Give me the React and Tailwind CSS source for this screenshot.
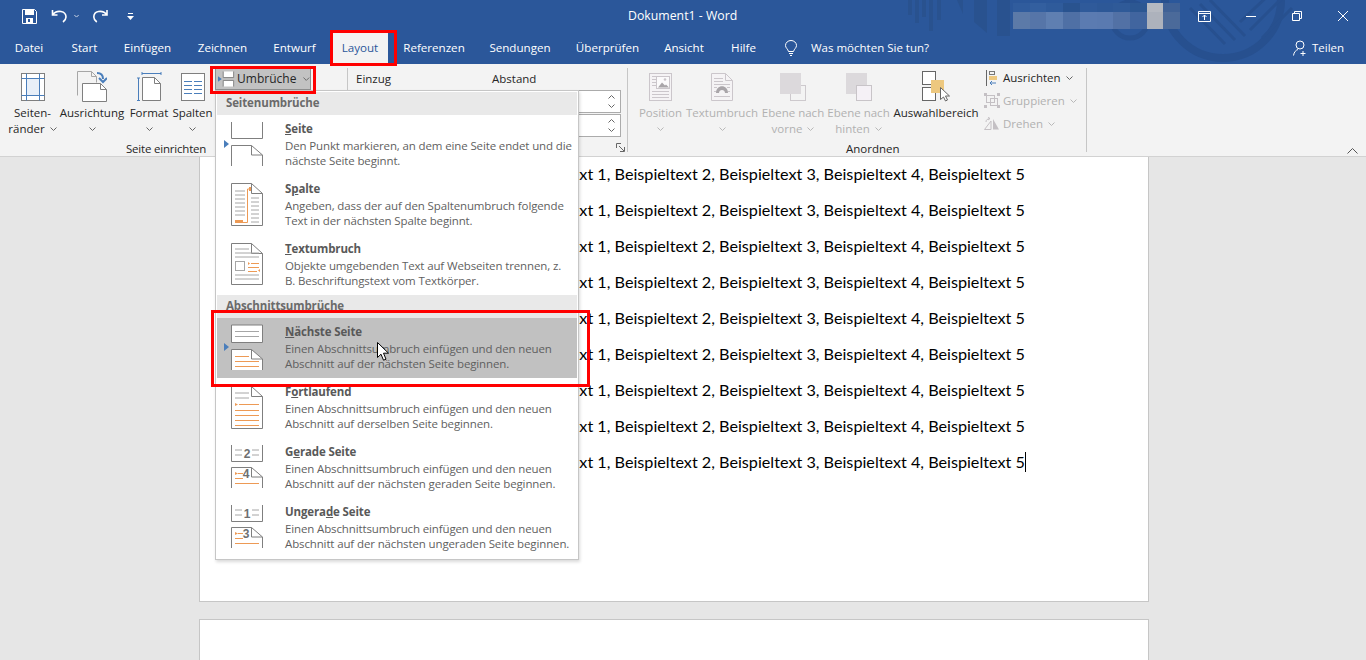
import React from "react";

const G = "#7f7f7f";
const O = "#ed9a55";
const L = "#a6a6a6";
const B = "#4a7ebb";

const Chev = ({ c = "#666", className = "" }) => (
  <svg width="7" height="4" viewBox="0 0 7 4" className={className}>
    <path d="M.5.5 3.500 3.500 6.500.5" fill="none" stroke={c} />
  </svg>
);

const Tab = ({ w, children }) => (
  <div className={`${w} flex h-full items-center justify-center whitespace-nowrap text-white`}>{children}</div>
);

function Decor() {
  return (
    <svg className="absolute left-[900px] top-0" width="400" height="64" viewBox="0 0 400 64" fill="none">
      <g fill="#29528f">
        <rect x="8" y="0" width="4" height="15" />
        <rect x="15" y="0" width="4" height="23" />
        <rect x="22" y="0" width="4" height="17" />
        <rect x="29" y="0" width="4" height="31" />
        <rect x="37" y="0" width="4" height="20" />
        <path d="M57 0h6v14zM74 0h13v33l-13-11zM97 0h13v36H97z" />
      </g>
      <circle cx="323" cy="0" r="58" stroke="#27508f" strokeWidth="8" />
      <circle cx="230" cy="20" r="18" stroke="#27508f" strokeWidth="5" />
      <g stroke="#27508f" strokeWidth="3">
        <path d="M290 8 325 44M300 4 335 40M310 0 345 36M340 22 372 -8M350 30 382 -2M362 38 392 8" />
      </g>
    </svg>
  );
}

function Mosaic() {
  const top = ["#305c9d", "#335f9f", "#2f5b9b", "#29538f", "#2f5a9a", "#2d5897", "#2f5a98", "#2c5792", "#b5b9c1", "#3f6196"];
  const bot = ["#5c7aa8", "#5675a8", "#5f7fb1", "#4f70a5", "#5b7bb1", "#5a7ab0", "#5271a5", "#41659f", "#adb2bc", "#4b6a9a"];
  return (
    <div className="mt-[3px] flex h-[26px] w-[167px] flex-col self-start">
      <div className="flex h-[9px]">{top.map((c, i) => <div key={i} className="h-full flex-1" style={{ background: c }} />)}</div>
      <div className="flex h-[17px]">{bot.map((c, i) => <div key={i} className="h-full flex-1" style={{ background: c }} />)}</div>
    </div>
  );
}

function TitleBar() {
  return (
    <div className="relative flex h-[32px] shrink-0 items-center text-[12.3px] text-white">
      <div className="flex w-[628px] items-center">
        <svg className="ml-[22px]" width="15" height="15" viewBox="0 0 15 15" fill="none">
          <path d="M.5.5h12l2 2v12H.5z" stroke="#fff" />
          <rect x="3" y="1" width="9" height="5" fill="#fff" />
          <rect x="4" y="9" width="7" height="5" fill="#fff" />
          <rect x="6" y="10" width="2" height="3" fill="#2b579a" />
        </svg>
        <svg className="ml-[14px]" width="16" height="14" viewBox="0 0 16 14" fill="none" stroke="#fff" strokeWidth="1.6">
          <path d="M1.500 1v5h5M1.500 6C4 2.500 7 2 10 2.500c3.500.7 5 3 5 5.500 0 2-1 3.500-3 5" />
        </svg>
        <Chev c="#fff" className="ml-[6px] scale-75" />
        <svg className="ml-[13px]" width="15" height="14" viewBox="0 0 15 14" fill="none" stroke="#fff" strokeWidth="1.6">
          <path d="M14 1v5H9M14 6C11.500 2.500 8.500 2 5.500 2.500 2 3.200.8 5.500.8 8c0 2 1 3.500 3 5" />
        </svg>
        <svg className="ml-[19px]" width="7" height="7" viewBox="0 0 7 7">
          <rect x="1" y="0" width="5" height="1" fill="#fff" />
          <path d="M0 3h7L3.500 7z" fill="#fff" />
        </svg>
      </div>
      <div className="w-[385px] whitespace-nowrap">Dokument1 - Word</div>
      <Mosaic />
      <div className="flex flex-1 items-center">
        <svg className="ml-[18px]" width="13" height="11" viewBox="0 0 13 11" fill="none" stroke="#fff">
          <path d="M.5.5h12v10H.5zM.5 2.500h12" />
          <path d="M6.500 9V4M4.500 6l2-2 2 2" />
        </svg>
        <div className="ml-[35px] h-px w-[10px] bg-white" />
        <svg className="ml-[36px]" width="10" height="10" viewBox="0 0 10 10" fill="none" stroke="#fff">
          <path d="M.5 2.500h7v7h-7zM2.500 2.500v-2h7v7h-2" />
        </svg>
        <svg className="ml-[36px]" width="10" height="10" viewBox="0 0 10 10" stroke="#fff">
          <path d="M0 0l10 10M10 0 0 10" />
        </svg>
      </div>
    </div>
  );
}

function Tabs() {
  return (
    <div className="relative flex h-[32px] shrink-0 items-center text-[11.6px]">
      <Tab w="w-[58px]">Datei</Tab>
      <Tab w="w-[53px]">Start</Tab>
      <Tab w="w-[73px]">Einfügen</Tab>
      <Tab w="w-[77px]">Zeichnen</Tab>
      <Tab w="w-[67px]">Entwurf</Tab>
      <div className="ml-[4px] flex h-full w-[56px] items-center justify-center bg-[#f3f3f3] text-[#2b579a]">Layout</div>
      <Tab w="w-[92px]">Referenzen</Tab>
      <Tab w="w-[80px]">Sendungen</Tab>
      <Tab w="w-[95px]">Überprüfen</Tab>
      <Tab w="w-[58px]">Ansicht</Tab>
      <Tab w="w-[61px]">Hilfe</Tab>
      <svg className="ml-[11px]" width="12" height="16" viewBox="0 0 12 16" fill="none" stroke="#fff">
        <path d="M3.500 11.500C3 9 .5 8 .5 5.500a5.500 5 0 0 1 11 0c0 2.500-2.500 3.500-3 6zM4 13.500h4M5 15.500h2" />
      </svg>
      <div className="ml-[14px] w-[482px] whitespace-nowrap text-[11.5px] text-white">Was möchten Sie tun?</div>
      <svg width="15" height="16" viewBox="0 0 15 16" fill="none" stroke="#fff">
        <circle cx="7" cy="5" r="4" />
        <path d="M.5 15.500C1 12 3 10 5 9.500M10 11v5M7.500 13.500h5" />
      </svg>
      <div className="ml-[4px] text-[11.5px] text-white">Teilen</div>
    </div>
  );
}

const Lbl = ({ children, off }) => (
  <div className={`flex h-[16px] items-center justify-center gap-[5px] whitespace-nowrap ${off ? "text-[#b1b1b1]" : "text-[#262626]"}`}>{children}</div>
);

function LargeBtn({ w, icon, l1, l2, chev, off }) {
  const cc = off ? "#b8b8b8" : "#666";
  return (
    <div className={`${w} flex shrink-0 flex-col items-center`}>
      <div className="flex h-[37px] w-full items-center justify-center">{icon}</div>
      <Lbl off={off}>{l1}</Lbl>
      <Lbl off={off}>{l2}{chev && <Chev c={cc} />}</Lbl>
    </div>
  );
}

const MarginsIcon = () => (
  <svg width="24" height="28" viewBox="0 0 24 28" fill="none">
    <rect x=".5" y=".5" width="23" height="27" fill="#fff" stroke={G} />
    <rect x="6" y="6" width="12" height="16" fill="#e8eff8" />
    <path d="M.5 5.500h23M.5 22.500h23M5.500.5v27M18.500.5v27" stroke={B} />
  </svg>
);
const OrientIcon = () => (
  <svg width="30" height="31" viewBox="0 0 30 31" fill="none">
    <path d="M.5 24.500V.5h14l5 5v6" stroke={L} />
    <path d="M14.500.5v5h5" stroke={L} />
    <path d="M5.500 12.500h18l6 6v12h-24z" fill="#fff" stroke={G} />
    <path d="M23.500 12.500v6h6" stroke={G} />
    <path d="M20 2c4 0 6 2 6 6" stroke={B} strokeWidth="2" />
    <path d="M22 7l4 4 4-4" stroke={B} strokeWidth="2" />
  </svg>
);
const FormatIcon = () => (
  <svg width="25" height="29" viewBox="0 0 25 29" fill="none">
    <path d="M5 1.500h19M5 0v3M24 0v3M1.500 6v23M0 6h3M0 28.500h3" stroke={B} />
    <path d="M5.500 5.500h12l6 6v17h-18z" fill="#fff" stroke={G} />
    <path d="M17.500 5.500v6h6" stroke={G} />
  </svg>
);
const ColsIcon = () => (
  <svg width="24" height="28" viewBox="0 0 24 28" fill="none">
    <rect x=".5" y=".5" width="23" height="27" fill="#fff" stroke={G} />
    <path d="M3 8.500h8M13 8.500h8M3 12.500h8M13 12.500h8M3 16.500h8M13 16.500h8M3 20.500h8M13 20.500h8" stroke={B} />
  </svg>
);
const PosIcon = () => (
  <svg width="24" height="28" viewBox="0 0 24 28" fill="none" stroke="#cbc6cb">
    <rect x=".5" y=".5" width="22" height="27" fill="#f5f3f5" />
    <path d="M3 3.500h4M3 6.500h4M3 9.500h4M3 12.500h4M3 18.500h17M3 21.500h17M3 24.500h17" />
    <rect x="7.500" y="3.500" width="13" height="12" fill="#fbfafb" />
    <path d="M9 14.500l4-5 3 3 1-1 3 3z" fill="#a9a5a9" stroke="none" />
    <circle cx="16" cy="6.500" r="1.300" fill="#c9c5c9" stroke="none" />
  </svg>
);
const WrapIcon = () => (
  <svg width="22" height="28" viewBox="0 0 22 28" fill="none" stroke="#cbc6cb">
    <path d="M.5.500h14l7 7v20H.5z" fill="#f5f3f5" />
    <path d="M14.500.5v7h7" />
    <path d="M3 5.500h9M3 8.500h9M3 11.500h16M3 14.500h3M16 14.500h3M3 18.500h2M17 18.500h2M3 23.500h16" />
    <path d="M5 20c0-9 12-9 12 0h-3c0-4-6-4-6 0z" fill="#a9a5a9" stroke="none" />
  </svg>
);
const FrontIcon = () => (
  <svg width="26" height="28" viewBox="0 0 26 28" fill="none">
    <rect x="10.500" y="12.500" width="15" height="15" fill="#f3f3f3" stroke="#cdc9cd" />
    <rect x="0" y="0" width="21" height="21" fill="#dcd9dc" />
  </svg>
);
const BackIcon = () => (
  <svg width="26" height="28" viewBox="0 0 26 28" fill="none">
    <rect x="0" y="0" width="21" height="21" fill="#dcd9dc" />
    <rect x="10.500" y="12.500" width="15" height="15" fill="#f5f1f6" stroke="#c8c4c8" />
  </svg>
);
const SelIcon = () => (
  <svg width="28" height="31" viewBox="0 0 28 31" fill="none">
    <rect x=".5" y=".5" width="13" height="13" fill="#fff" stroke="#666" />
    <rect x=".5" y="16.500" width="13" height="13" fill="#fff" stroke="#666" />
    <rect x="9" y="9" width="13" height="13" fill="#edc87f" />
    <path d="M18.500 16.500v12l3-2.500 2 4 2-1-2-4h4z" fill="#fff" stroke="#666" />
  </svg>
);

const AlignI = () => (
  <svg width="12" height="16" viewBox="0 0 12 16" fill="none">
    <path d="M.5 0v16" stroke="#666" />
    <rect x="3.500" y="1.500" width="5" height="3" stroke="#777" />
    <rect x="3" y="6" width="8" height="4" fill="#edc87f" />
    <path d="M10 13H4M6 11l-2 2 2 2" stroke={B} />
  </svg>
);
const GroupI = () => (
  <svg width="16" height="15" viewBox="0 0 16 15" fill="none" stroke="#c4c0c4">
    <rect x="2.500" y="2.500" width="8" height="7" />
    <rect x="6.500" y="5.500" width="7" height="7" />
    <path d="M0 0h3v3H0zM13 0h3v3h-3zM0 12h3v3H0zM13 12h3v3h-3z" fill="#c4c0c4" stroke="none" />
  </svg>
);
const RotI = () => (
  <svg width="16" height="13" viewBox="0 0 16 13" fill="none" stroke="#c4c0c4">
    <path d="M.5 12.500 7 4v8.500z" />
    <path d="M9 12.500V2l6 10.500z" fill="#c4c0c4" stroke="none" />
    <path d="M2 5c0-2 1-3 4-3.500M4 0l2 1.500L4 3" />
  </svg>
);

const SmallRow = ({ icon, off, children }) => (
  <div className={`flex h-[23px] items-center gap-[3px] whitespace-nowrap ${off ? "text-[#b1b1b1]" : "text-[#262626]"}`}>
    <div className="flex w-[16px] justify-center">{icon}</div>
    {children}
    <Chev className="ml-[2px]" c={off ? "#b8b8b8" : "#666"} />
  </div>
);

const Spin = () => (
  <div className="flex h-[23px] w-[129px] items-center justify-end border border-[#ababab] bg-white pr-[5px]">
    <div className="flex flex-col gap-[5px]">
      <svg width="7" height="4" viewBox="0 0 7 4"><path d="M.5 3.500 3.500.5l3 3" fill="none" stroke="#666" /></svg>
      <Chev />
    </div>
  </div>
);

function Ribbon() {
  return (
    <div className="flex h-[93px] shrink-0 border-b border-[#d2d2d2] bg-[#f3f3f3] pt-[4px] text-[11.5px] text-[#262626]">
      <div className="flex w-[215px] shrink-0 flex-col">
        <div className="flex h-[72px] shrink-0 pl-[8px]">
          <LargeBtn w="w-[49px]" icon={<MarginsIcon />} l1="Seiten-" l2="ränder" chev />
          <LargeBtn w="w-[70px]" icon={<OrientIcon />} l1="Ausrichtung" l2="" chev />
          <LargeBtn w="w-[44px]" icon={<FormatIcon />} l1="Format" l2="" chev />
          <LargeBtn w="w-[43px]" icon={<ColsIcon />} l1="Spalten" l2="" chev />
        </div>
        <div className="ml-[126px] whitespace-nowrap tracking-[-0.2px]">Seite einrichten</div>
      </div>
      <div className="w-[132px] shrink-0">
        <div className="flex h-[22px] w-[96px] items-center gap-[2px] border border-[#8f8f8f] bg-[#c2c2c2] pl-[2px]">
          <svg width="18" height="16" viewBox="0 0 18 16" fill="none">
            <path d="M0 5l4 3-4 3z" fill={B} />
            <path d="M5.500 0v6.500h11V0M5.500 16V9.500h11V16" fill="#fff" stroke={G} />
          </svg>
          <span className="text-[12px]">Umbrüche</span>
          <Chev className="ml-[5px]" />
        </div>
      </div>
      <div className="relative mb-[4px] w-[281px] shrink-0 border-x border-[#c6c6c6] pl-[8px]">
        <div className="mb-px flex h-[21px] items-center">
          <div className="w-[136px]">Einzug</div>
          <div>Abstand</div>
        </div>
        <div className="flex flex-col items-end gap-px pr-[6px]">
          <Spin />
          <Spin />
        </div>
        <svg className="absolute bottom-[0px] right-[2px]" width="9" height="9" viewBox="0 0 9 9" fill="none" stroke="#666">
          <path d="M.5 5V.5H5M3 3l5 5M8.500 4v4.500H4" />
        </svg>
      </div>
      <div className="mb-[4px] flex w-[459px] shrink-0 flex-col border-r border-[#c6c6c6]">
        <div className="flex h-[72px] shrink-0 pl-[10px]">
          <LargeBtn w="w-[45px]" off icon={<PosIcon />} l1="Position" l2="" chev />
          <LargeBtn w="w-[78px]" off icon={<WrapIcon />} l1="Textumbruch" l2="" chev />
          <LargeBtn w="w-[64px]" off icon={<FrontIcon />} l1="Ebene nach" l2="vorne" chev />
          <LargeBtn w="w-[67px]" off icon={<BackIcon />} l1="Ebene nach" l2="hinten" chev />
          <LargeBtn w="w-[88px]" icon={<SelIcon />} l1="Auswahlbereich" l2="" />
          <div className="-mt-[2px] ml-[4px] flex flex-col">
            <SmallRow icon={<AlignI />}>Ausrichten</SmallRow>
            <SmallRow off icon={<GroupI />}>Gruppieren</SmallRow>
            <SmallRow off icon={<RotI />}>Drehen</SmallRow>
          </div>
        </div>
        <div className="ml-[218px] whitespace-nowrap">Anordnen</div>
      </div>
      <div className="flex flex-1 items-end justify-end pb-[2px] pr-[8px]">
        <svg width="11" height="6" viewBox="0 0 11 6" fill="none" stroke="#555"><path d="M.5 5.500l5-5 5 5" /></svg>
      </div>
    </div>
  );
}

const Li = ({ d, c = L }) => <path d={d} stroke={c} fill="none" />;

const icons = {
  seite: (
    <>
      <path d="M.5 1v16.500h31V1" stroke={G} />
      <path d="M.5 45V24.500h20l11 9.500v11" stroke={G} />
      <path d="M20.500 24.500V34h11" stroke={G} />
    </>
  ),
  spalte: (
    <>
      <path d="M.5 2.500h20l11 10v32H.5z" fill="#fff" stroke={G} />
      <path d="M20.500 2.500v10h11" stroke={G} />
      <Li d="M4 10h10M4 14h10M4 18h10M4 22h10M4 26h10M4 30h10M4 34h10M20 17h8M20 21h8M20 25h8M20 29h8M20 33h8M20 37h8M20 41h8" />
      <path d="M4 40.500h8" stroke={O} strokeWidth="3" />
      <path d="M12 41.500h4.500V8H19" stroke={O} />
      <path d="M18 6h2v4h-2z" fill={O} />
    </>
  ),
  wrap: (
    <>
      <path d="M.5 2.500h20l11 10v31H.5z" fill="#fff" stroke={G} />
      <path d="M20.500 2.500v10h11" stroke={G} />
      <Li d="M4 8h14M4 12h24M4 16h24M4 38h24" />
      <rect x="4.500" y="20.500" width="9" height="9" fill="none" stroke={L} />
      <path d="M4 34h24" stroke={L} />
      <path d="M17 21l2 1.500-2 1.500zM29 28l-2 1.500 2 1.500z" fill={O} />
      <path d="M20 22.500h8M17 26.500h11M17 30.500h9" stroke={O} />
    </>
  ),
  next: (
    <>
      <path d="M.5 1h31v17.500H.5z" fill="#fff" stroke={G} />
      <Li d="M4 7.500h24M4 12.500h24" />
      <path d="M.5 46V25.500h20l11 9.500v11" fill="#fff" stroke={G} />
      <path d="M20.500 25.500V35h11" stroke={G} />
      <path d="M4 32.500h14M4 37.500h24M4 42.500h24" stroke={O} />
    </>
  ),
  cont: (
    <>
      <path d="M.5 2.500h20l11 10v32H.5z" fill="#fff" stroke={G} />
      <path d="M20.500 2.500v10h11" stroke={G} />
      <Li d="M4 9h14M4 14h14" />
      <path d="M4 19l3 1.500-3 1.500z" fill={O} />
      <path d="M8 20.500h20M4 26.500h24M4 31.500h24M4 36.500h24M4 41.500h24" stroke={O} />
    </>
  ),
};

const EvenOdd = ({ a, b }) => (
  <>
    <path d="M.5 1v16.500h31V1" stroke={G} />
    <Li d="M4 6h7M21 6h7M4 11h7M21 11h7" />
    <text x="16" y="14" textAnchor="middle" fontSize="12" fontWeight="700" fill="#6f6f6f" fontFamily="Liberation Sans, sans-serif">{a}</text>
    <path d="M.5 44V23.500h20l11 9.500v11" stroke={G} fill="none" />
    <path d="M20.500 23.500V33h11" stroke={G} />
    <path d="M4 28l3 1.500-3 1.500z" fill={O} />
    <path d="M7 29.500h5M4 34.500h8M4 39.500h24" stroke={O} />
    <text x="15" y="34" textAnchor="middle" fontSize="12" fontWeight="700" fill="#6f6f6f" fontFamily="Liberation Sans, sans-serif">{b}</text>
  </>
);

function Item({ icon, title, d1, d2, hover, arrow }) {
  return (
    <div className={`relative flex h-[60px] shrink-0 ${hover ? "bg-[#c1c1c1]" : ""}`}>
      {arrow && <div className="absolute left-[7px] top-[25px] h-0 w-0 border-y-[4px] border-l-[5px] border-y-transparent border-l-[#4a7ebb]" />}
      <svg className="ml-[14px] mt-[6px] shrink-0" width="33" height="47" viewBox="0 0 33 47" fill="none">{icon}</svg>
      <div className="ml-[21px] pt-[5px] tracking-[-0.13px]">
        <div className="h-[18px] whitespace-nowrap text-[11.5px] font-bold leading-[17px] text-[#595959]">{title}</div>
        <div className="whitespace-nowrap text-[11.5px] leading-[15px] text-[#5f5f5f]">{d1}</div>
        <div className="whitespace-nowrap text-[11.5px] leading-[15px] text-[#5f5f5f]">{d2}</div>
      </div>
    </div>
  );
}

const Head = ({ children }) => (
  <div className="flex h-[23px] shrink-0 items-center bg-[#e9e9e9] pb-px pl-[9px] text-[11.5px] font-bold tracking-[-0.13px] text-[#6b6b6b]">{children}</div>
);

function Menu() {
  return (
    <div className="absolute left-[215px] top-[90px] flex h-[470px] w-[364px] flex-col border border-[#c6c6c6] bg-white px-px pt-px shadow-[1px_2px_3px_rgba(0,0,0,0.15)]">
      <Head>Seitenumbrüche</Head>
      <Item arrow icon={icons.seite} title={<><u>S</u>eite</>} d1="Den Punkt markieren, an dem eine Seite endet und die" d2="nächste Seite beginnt." />
      <Item icon={icons.spalte} title={<>S<u>p</u>alte</>} d1="Angeben, dass der auf den Spaltenumbruch folgende" d2="Text in der nächsten Spalte beginnt." />
      <Item icon={icons.wrap} title={<><u>T</u>extumbruch</>} d1="Objekte umgebenden Text auf Webseiten trennen, z." d2="B. Beschriftungstext vom Textkörper." />
      <Head>Abschnittsumbrüche</Head>
      <Item hover arrow icon={icons.next} title={<><u>N</u>ächste Seite</>} d1="Einen Abschnittsumbruch einfügen und den neuen" d2="Abschnitt auf der nächsten Seite beginnen." />
      <Item icon={icons.cont} title={<>F<u>o</u>rtlaufend</>} d1="Einen Abschnittsumbruch einfügen und den neuen" d2="Abschnitt auf derselben Seite beginnen." />
      <Item icon={<EvenOdd a="2" b="4" />} title={<>G<u>e</u>rade Seite</>} d1="Einen Abschnittsumbruch einfügen und den neuen" d2="Abschnitt auf der nächsten geraden Seite beginnen." />
      <Item icon={<EvenOdd a="1" b="3" />} title={<>Ungera<u>d</u>e Seite</>} d1="Einen Abschnittsumbruch einfügen und den neuen" d2="Abschnitt auf der nächsten ungeraden Seite beginnen." />
    </div>
  );
}

const LINE = "Beispieltext 1, Beispieltext 2, Beispieltext 3, Beispieltext 4, Beispieltext 5";

function Doc() {
  return (
    <div className="min-h-0 flex-1 overflow-hidden bg-[#e6e6e6] pl-[199px]">
      <div className="h-[445px] w-[950px] border-x border-b border-[#c6c6c6] bg-white pl-[310px] font-['Lato',sans-serif] text-[16.2px] text-black">
        {Array.from({ length: 9 }, (_, i) => (
          <div key={i} className="flex h-[36px] items-center whitespace-nowrap pb-[2px]">
            {LINE}
            {i === 8 && <span className="inline-block h-[20px] w-px bg-black" />}
          </div>
        ))}
      </div>
      <div className="mt-[17px] h-[100px] w-[950px] border border-[#c6c6c6] bg-white" />
    </div>
  );
}

export default function App() {
  return (
    <div className="relative flex h-screen w-full flex-col overflow-hidden font-['Open_Sans',sans-serif]">
      <div className="relative flex shrink-0 flex-col bg-[#2b579a]">
        <Decor />
        <TitleBar />
        <Tabs />
      </div>
      <Ribbon />
      <Doc />
      <Menu />
      <div className="absolute left-[330px] top-[30px] h-[36px] w-[67px] border-[3px] border-[#f00]" />
      <div className="absolute left-[210px] top-[66px] h-[28px] w-[106px] border-[3px] border-[#f00]" />
      <div className="absolute left-[211px] top-[310px] h-[77px] w-[379px] border-[3px] border-[#f00]" />
      <svg className="absolute left-[377px] top-[342px]" width="13" height="19" viewBox="0 0 13 19">
        <path d="M.5.5v15l3.500-3.300 2.500 6 2.500-1-2.500-6h5z" fill="#fff" stroke="#000" />
      </svg>
    </div>
  );
}
